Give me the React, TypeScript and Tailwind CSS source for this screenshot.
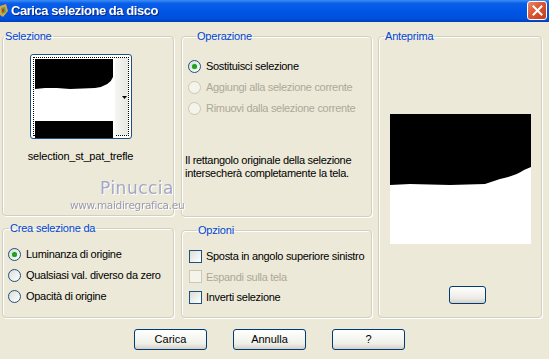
import React from "react";

const font = { fontFamily: '"Liberation Sans", Arial, sans-serif' };

function Radio({ checked, disabled, label }: { checked?: boolean; disabled?: boolean; label: string }) {
  return (
    <div className="flex items-center h-[21px] whitespace-nowrap">
      <span
        className={
          "relative w-[13px] h-[13px] rounded-full border flex items-center justify-center " +
          (disabled
            ? "border-[#cac8bb] bg-[#f5f4ea]"
            : "border-[#1c5180] bg-[linear-gradient(135deg,#dcdcd6,#ffffff)]")
        }
      >
        {checked && <span className="w-[5px] h-[5px] rounded-full bg-[#21a121] shadow-[0_0_1px_#5bd05b]" />}
      </span>
      <span className={"ml-[5px] text-[11px] tracking-[-0.3px] " + (disabled ? "text-[#aca899]" : "text-black")}>{label}</span>
    </div>
  );
}

function Check({ disabled, label }: { disabled?: boolean; label: string }) {
  return (
    <div className="flex items-center h-[20.5px] whitespace-nowrap">
      <span
        className={
          "w-[13px] h-[13px] border " +
          (disabled ? "border-[#cac8bb] bg-[#f5f4ea]" : "border-[#1c5180] bg-[linear-gradient(135deg,#dcdcd6,#ffffff)]")
        }
      />
      <span className={"ml-[4px] text-[11px] tracking-[-0.3px] " + (disabled ? "text-[#aca899]" : "text-black")}>{label}</span>
    </div>
  );
}

function Group({
  title,
  className,
  legendClass,
  children,
}: {
  title: string;
  className: string;
  legendClass: string;
  children?: React.ReactNode;
}) {
  return (
    <fieldset className={"border border-[#d0d0bf] rounded-[4px] shadow-[inset_1px_1px_0_#ffffff,1px_1px_0_#ffffff] " + className}>
      <legend className={"text-[11px] text-[#0046d5] px-[1px] leading-[13px] tracking-[-0.2px] " + legendClass}>{title}</legend>
      {children}
    </fieldset>
  );
}

function XpButton({ label }: { label: string }) {
  return (
    <button className="w-[73px] h-[21px] rounded-[3px] border border-[#003c74] bg-[linear-gradient(#ffffff,#f0f0ea_70%,#d6d0c5)] text-[11px] text-black flex items-center justify-center">
      {label}
    </button>
  );
}

export default function App() {
  return (
    <div className="relative w-[549px] h-[359px] bg-[#ece9d8] overflow-hidden flex flex-col" style={font}>
      {/* Title bar */}
      <div className="h-[22px] flex items-center bg-[linear-gradient(#3d8ff5,#0a5fe8_15%,#0055e5_50%,#0050dc_85%,#003fb8)] relative">
        <svg width="10" height="16" viewBox="0 0 10 16" className="ml-0 mr-[1px]">
          <path d="M0 3 L6 1 L8 8 L3 14 L0 12 Z" fill="#d6a54a" />
          <path d="M1 5 L5 4 L6 9 L2 11 Z" fill="#5aa04a" />
          <path d="M2 6 L4 6 L4 9 L2 9 Z" fill="#c0392b" />
        </svg>
        <span className="text-white font-bold text-[13px] tracking-[-0.45px] drop-shadow-[1px_1px_0_#0a2a80]">Carica selezione da disco</span>
        <div className="absolute left-[527px] top-[1px] w-[20px] h-[19px] rounded-[3px] border border-white bg-[linear-gradient(135deg,#e98a6a,#d9522d_50%,#c2401e)] flex items-center justify-center">
          <svg width="11" height="11" viewBox="0 0 11 11">
            <path d="M1.5 1.5 L9.5 9.5 M9.5 1.5 L1.5 9.5" stroke="white" strokeWidth="2" strokeLinecap="square" />
          </svg>
        </div>
      </div>

      {/* Body */}
      <div className="flex pl-[2px] pt-[8px]">
        {/* Left column */}
        <div className="w-[172px] flex flex-col">
          <Group title="Selezione" className="h-[186px] flex flex-col items-center" legendClass="ml-[1px]">
            <div className="mt-[11px] ml-[-15px] w-[102px] h-[85px] rounded-[3px] border border-[#1c5180] bg-white p-[2px]">
              <div className="w-full h-full border border-dotted border-black flex">
                <svg width="80" height="79" viewBox="0 0 80 79" className="mt-[1px] ml-[1px]">
                  <rect width="80" height="79" fill="white" />
                  <path d="M0 0 H78 V18 Q75 27 60 29 L35 30 L22 29 L10 29 L0 30 Z" fill="black" />
                  <rect x="0" y="62" width="78" height="17" fill="black" />
                </svg>
                <div className="flex-1 bg-[linear-gradient(90deg,#f6f6f3,#e8e8e2)] relative">
                  <svg width="5" height="3" viewBox="0 0 5 3" className="absolute right-[1px] top-[38px]">
                    <path d="M0 0 H5 L2.5 3 Z" fill="black" />
                  </svg>
                </div>
              </div>
            </div>
            <div className="mt-[9px] ml-[-15px] text-[11px] text-black tracking-[-0.2px]">selection_st_pat_trefle</div>
          </Group>
          <Group title="Crea selezione da" className="mt-[6px] h-[96px] pl-[5px] pt-[9px]" legendClass="ml-[1px]">
            <Radio checked label="Luminanza di origine" />
            <Radio label="Qualsiasi val. diverso da zero" />
            <Radio label="Opacità di origine" />
          </Group>
        </div>

        {/* Middle column */}
        <div className="ml-[7px] w-[191px] flex flex-col">
          <Group title="Operazione" className="h-[187px] pl-[6px] pt-[13px]" legendClass="ml-[8px]">
            <Radio checked label="Sostituisci selezione" />
            <Radio disabled label="Aggiungi alla selezione corrente" />
            <Radio disabled label="Rimuovi dalla selezione corrente" />
            <div className="mt-[35px] ml-[-3px] text-[11px] leading-[13px] text-black tracking-[-0.3px] whitespace-nowrap">
              Il rettangolo originale della selezione
              <br />
              intersecherà completamente la tela.
            </div>
          </Group>
          <Group title="Opzioni" className="mt-[7px] h-[94px] pl-[7px] pt-[9px]" legendClass="ml-[8px]">
            <Check label="Sposta in angolo superiore sinistro" />
            <Check disabled label="Espandi sulla tela" />
            <Check label="Inverti selezione" />
          </Group>
        </div>

        {/* Right column */}
        <div className="ml-[6px] w-[164px]">
          <Group title="Anteprima" className="h-[288px] flex flex-col items-center" legendClass="ml-[5px]">
            <svg width="141" height="130" viewBox="0 0 141 130" className="mt-[71px]">
              <rect width="141" height="130" fill="white" />
              <path d="M0 0 H141 V53 L134 56 Q125 62 110 65 L95 70 L60 71 L20 70 L0 71 Z" fill="black" />
            </svg>
            <div className="mt-[42px] ml-[15px] w-[37px] h-[18px] rounded-[3px] border border-[#003c74] bg-[linear-gradient(#ffffff,#ecebe6_70%,#d6d0c5)]" />
          </Group>
        </div>
      </div>

      {/* Buttons */}
      <div className="flex pl-[134px] mt-[11px] gap-[26px]">
        <XpButton label="Carica" />
        <XpButton label="Annulla" />
        <XpButton label="?" />
      </div>

      {/* Watermark */}
      <div className="absolute left-[100px] top-[178px] text-[17px] leading-[20px] text-[#a3a6c6] tracking-[0.5px] drop-shadow-[1px_1px_0_#ffffff]" style={{ fontFamily: '"DejaVu Sans", sans-serif' }}>
        Pinuccia
      </div>
      <div className="absolute left-[70px] top-[199px] text-[10.5px] leading-[12px] text-[#9a9aae] tracking-[-0.3px] drop-shadow-[1px_1px_0_#ffffff]" style={{ fontFamily: '"DejaVu Sans", sans-serif' }}>
        www.maidiregrafica.eu
      </div>
    </div>
  );
}
